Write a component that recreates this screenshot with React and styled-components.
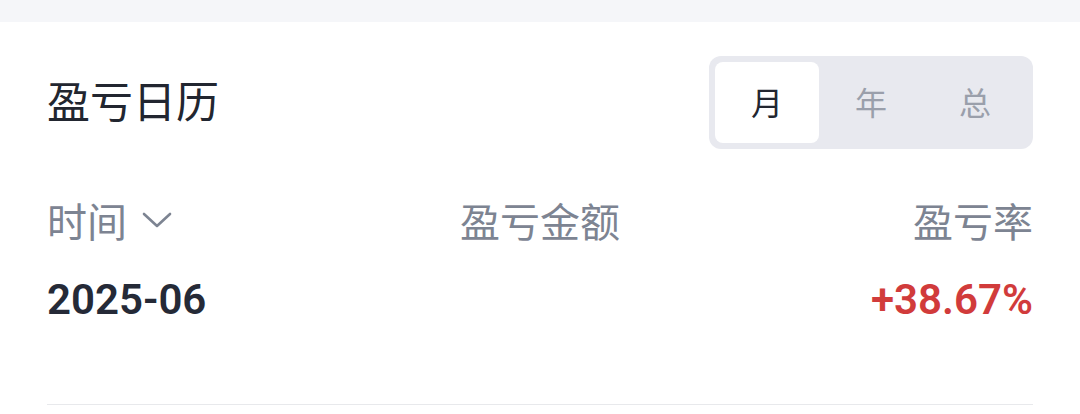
import React from 'react';
import styled, { createGlobalStyle } from 'styled-components';

const GlobalStyle = createGlobalStyle`
  body {
    margin: 0;
    background: #ffffff;
    font-family: Roboto, "Noto Sans CJK SC", sans-serif;
  }
`;

const TopBand = styled.div`
  height: 22px;
  background: #f5f6f9;
`;

const Panel = styled.div`
  padding: 0 47px;
  background: #ffffff;
`;

const TitleRow = styled.div`
  display: flex;
  align-items: center;
  justify-content: space-between;
  padding-top: 34px;
`;

const Title = styled.h2`
  margin: -8px 0 0;
  font-size: 43px;
  font-weight: 400;
  color: #222630;
  font-family: "Noto Sans CJK SC", sans-serif;
`;

const Segment = styled.div`
  display: flex;
  padding: 6px;
  background: #e8e9ef;
  border-radius: 12px;
`;

const SegItem = styled.div`
  width: 104px;
  height: 81px;
  display: flex;
  align-items: center;
  justify-content: center;
  border-radius: 8px;
  font-size: 32px;
  padding-bottom: 4px;
  box-sizing: border-box;
  font-family: "Noto Sans CJK SC", sans-serif;
  background: ${p => (p.active ? '#ffffff' : 'transparent')};
  color: ${p => (p.active ? '#222630' : '#9a9fab')};
`;

const Grid = styled.div`
  display: grid;
  grid-template-columns: 1fr 1fr 1fr;
  align-items: center;
`;

const HeadRow = styled(Grid)`
  margin-top: 40px;
  height: 62px;
  font-size: 40px;
  color: #7d8492;
  font-family: "Noto Sans CJK SC", sans-serif;
`;

const Cell = styled.div`
  display: flex;
  align-items: center;
  justify-content: ${p => p.align || 'flex-start'};
  gap: 14px;
`;

const DataRow = styled(Grid)`
  margin-top: 18px;
  height: 60px;
  padding-bottom: 75px;
  font-size: 42px;
  font-weight: 600;
  color: #252a37;
  font-family: Roboto, sans-serif;
  border-bottom: 1.5px solid #e8e9ec;
`;

const Rate = styled(Cell)`
  color: ${p => (p.up ? '#d13b3b' : '#1f9d55')};
`;

const Chevron = () => (
  <svg width="32" height="20" viewBox="0 0 32 20" fill="none">
    <path d="M3 4 L16 16 L29 4" stroke="#7d8492" strokeWidth="2.6" strokeLinecap="round" strokeLinejoin="round" />
  </svg>
);

const App = () => {
  const [mode, setMode] = React.useState('月');
  const modes = ['月', '年', '总'];

  return (
    <>
      <GlobalStyle />
      <TopBand />
      <Panel>
        <TitleRow>
          <Title>盈亏日历</Title>
          <Segment>
            {modes.map(m => (
              <SegItem key={m} active={m === mode} onClick={() => setMode(m)}>
                {m}
              </SegItem>
            ))}
          </Segment>
        </TitleRow>
        <HeadRow>
          <Cell>
            时间 <Chevron />
          </Cell>
          <Cell align="center">盈亏金额</Cell>
          <Cell align="flex-end">盈亏率</Cell>
        </HeadRow>
        <DataRow>
          <Cell>2025-06</Cell>
          <Cell align="center"></Cell>
          <Rate align="flex-end" up>+38.67%</Rate>
        </DataRow>
      </Panel>
    </>
  );
};

export default App;
